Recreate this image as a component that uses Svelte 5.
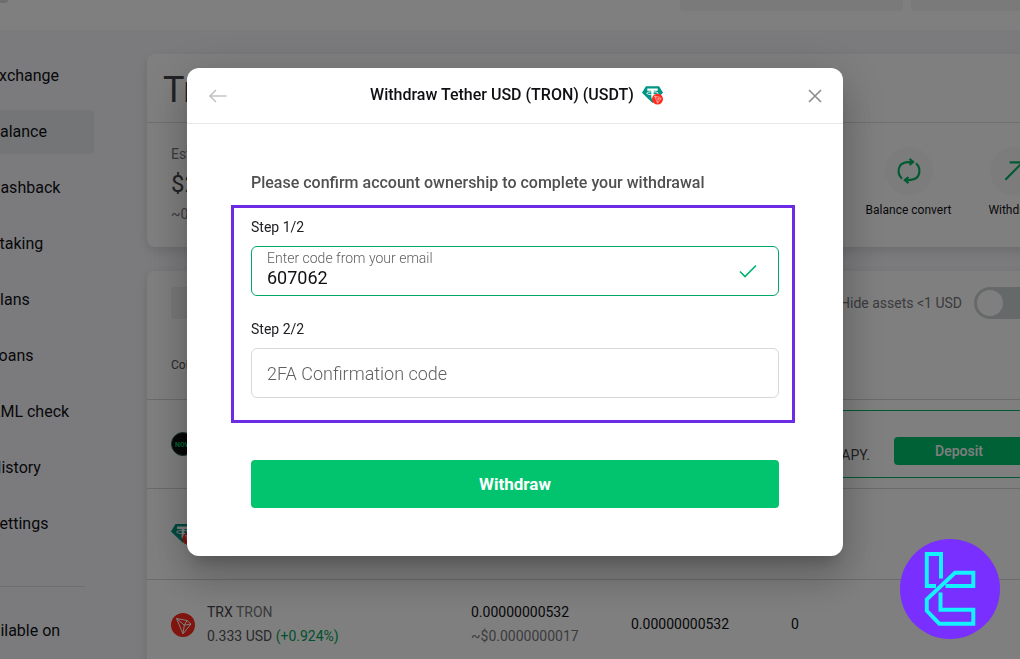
<script lang="ts">
  const navItems = ['Exchange', 'Balance', 'Cashback', 'Staking', 'Plans', 'Loans', 'AML check', 'History', 'Settings'];
  const active = 'Balance';

  let emailCode = $state('607062');
  let twoFaCode = $state('');
  let hideSmall = $state(false);
</script>

{#snippet tronMark()}
  <circle cx="12" cy="12" r="12" fill="#ff2a1c" />
  <path
    d="M5.500 5.500l10.500 2L20 11l-8 9.800zM5.500 5.500l7.800 6.700L20 11M13.300 12.200L16 7.500M13.300 12.200l-1.300 8.600"
    fill="none"
    stroke="#fff"
    stroke-width="1"
    stroke-linejoin="round"
  />
{/snippet}

{#snippet tetherIcon()}
  <svg class="tether" viewBox="0 0 24 22" aria-hidden="true">
    <path d="M4.500 1h15L24 8.500 12 20 0 8.500z" fill="#009482" />
    <path d="M6 3.500h12v2.500h-4.700V15h-2.600V6H6z" fill="#fff" />
    <ellipse cx="12" cy="9" rx="6.500" ry="1.700" fill="none" stroke="#fff" stroke-width="1" />
    <g transform="translate(11.500 9.500) scale(.52)">{@render tronMark()}</g>
  </svg>
{/snippet}

<div class="page">
  <header class="topbar">
    <span class="avatar"></span>
    <span class="pill"></span>
    <span class="pill last"></span>
  </header>

  <div class="layout">
    <aside>
      <nav>
        {#each navItems as item}
          <a href="#{item}" class:active={item === active}>{item}</a>
        {/each}
      </nav>
      <p class="available">Available on</p>
    </aside>

    <main>
      <section class="card summary">
        <h1>Trading</h1>
        <div class="summary-body">
          <div class="totals">
            <span class="muted">Estimated</span>
            <span class="amount">$2.35</span>
            <span class="muted">~0.00003</span>
          </div>
          <div class="actions">
            <button type="button" class="action">
              <span class="round">
                <svg viewBox="0 0 24 24" width="26" height="26" aria-hidden="true">
                  <path d="M5.500 19.200A9.600 9.600 0 0 1 4 6.700C6 4.200 9 3.300 15.500 3.600M12.500.800l3.300 2.900-3.300 2.700" />
                  <path d="M18.500 4.800A9.600 9.600 0 0 1 20 17.300c-2 2.500-5 3.400-11.500 3.100M11.500 23.200l-3.300-2.900 3.300-2.700" />
                </svg>
              </span>
              Balance convert
            </button>
            <button type="button" class="action">
              <span class="round">
                <svg viewBox="0 0 24 24" width="26" height="26" aria-hidden="true">
                  <path d="M4 20L20 4M8 4h12v12" />
                </svg>
              </span>
              Withdraw
            </button>
          </div>
        </div>
      </section>

      <section class="card assets">
        <div class="toolbar">
          <span class="search"></span>
          <label class="toggle">
            Hide assets &lt;1 USD
            <input type="checkbox" bind:checked={hideSmall} />
          </label>
        </div>
        <div class="columns">Coin</div>

        <div class="row promo">
          <svg class="coin" viewBox="0 0 24 24" aria-hidden="true">
            <circle cx="12" cy="12" r="11.500" fill="#101010" stroke="#3b6a50" />
            <text x="4" y="15" font-size="7" font-weight="700" fill="#00c46c">NOW</text>
          </svg>
          <div class="banner">
            <span>Earn up to 25% APY.</span>
            <button type="button" class="deposit">Deposit</button>
          </div>
        </div>

        <div class="row">
          <span class="coin">{@render tetherIcon()}</span>
        </div>

        <div class="row">
          <svg class="coin" viewBox="0 0 24 24" aria-hidden="true">{@render tronMark()}</svg>
          <div class="name">
            <span><b>TRX</b> TRON</span>
            <span class="rate">0.333 USD <i>(+0.924%)</i></span>
          </div>
          <div class="balance">
            <span>0.00000000532</span>
            <span class="muted">~$0.0000000017</span>
          </div>
          <span class="cell">0.00000000532</span>
          <span class="cell">0</span>
        </div>
      </section>
    </main>
  </div>
</div>

<div class="overlay">
  <div class="modal" role="dialog" aria-modal="true" aria-labelledby="modal-title">
    <header class="modal-header">
      <button type="button" class="icon-btn back" aria-label="Back">
        <svg viewBox="0 0 18 14" width="18" height="14"><path d="M17.500 7H1M7 1L1 7l6 6" /></svg>
      </button>
      <h2 id="modal-title">Withdraw Tether USD (TRON) (USDT) {@render tetherIcon()}</h2>
      <button type="button" class="icon-btn" aria-label="Close">
        <svg viewBox="0 0 14 14" width="14" height="14"><path d="M1 1l12 12M13 1L1 13" /></svg>
      </button>
    </header>

    <form class="modal-body" onsubmit={(e) => e.preventDefault()}>
      <p class="lead">Please confirm account ownership to complete your withdrawal</p>

      <div class="steps">
        <p class="step">Step 1/2</p>
        <div class="field valid">
          <div class="stack">
            <label for="email-code">Enter code from your email</label>
            <input id="email-code" type="text" inputmode="numeric" bind:value={emailCode} />
          </div>
          <svg viewBox="0 0 18 14" width="18" height="14" aria-hidden="true"><path d="M1 7.500L6 12.500 17 1.500" /></svg>
        </div>
        <p class="step">Step 2/2</p>
        <div class="field">
          <input type="text" aria-label="2FA Confirmation code" placeholder="2FA Confirmation code" bind:value={twoFaCode} />
        </div>
      </div>

      <button type="submit" class="submit">Withdraw</button>
    </form>
  </div>
</div>

<div class="brand">
  <svg viewBox="0 0 100 100" aria-hidden="true">
    <circle cx="50" cy="50" r="50" fill="#782fff" />
    <g fill="none" stroke="#14f1ff" stroke-width="4">
      <path d="M36 47h-9.200V15H41v24.500" />
      <path d="M45.500 47h27.800V33.800H55L26.800 60.300V71.800l12.500 12.900h34V70.700H40.500V53.500" />
    </g>
  </svg>
</div>

<style>
  :global(body) {
    margin: 0;
    font-family: Roboto, 'Liberation Sans', sans-serif;
    font-size: 14px;
    color: #101014;
  }
  p, h1, h2 { margin: 0; font-weight: 400; }
  button, input { font-family: inherit; }
  button { border: 0; padding: 0; cursor: pointer; }

  .page {
    height: 100vh;
    overflow: hidden;
    background: #f7f7fc;
  }
  .topbar {
    display: flex;
    justify-content: flex-end;
    gap: 8px;
    height: 30px;
    background: #fff;
  }
  .avatar { width: 8px; height: 3px; margin-right: auto; background: #ddd; border-radius: 0 0 8px 0; }
  .pill { width: 223px; height: 11px; background: #f5f5f7; border-radius: 0 0 4px 4px; }
  .pill.last { width: 109px; border-radius: 0 0 0 4px; }

  .layout {
    display: flex;
    gap: 53px;
    padding-top: 24px;
    margin: 0 -60px 0 -26px;
  }
  aside { width: 120px; flex: none; font-size: 16px; }
  nav {
    display: flex;
    flex-direction: column;
    gap: 12px;
    padding-bottom: 40px;
    margin-right: 9px;
    border-bottom: 1px solid #dcdcde;
  }
  nav a {
    padding-left: 16px;
    margin-right: -9px;
    border-radius: 0 4px 4px 0;
    line-height: 44px;
    color: inherit;
    text-decoration: none;
  }
  nav a.active { background: #e6ebee; }
  .available { padding-top: 32px; line-height: 24px; }

  main {
    flex: 1;
    display: flex;
    flex-direction: column;
    gap: 24px;
  }
  .card {
    background: #fff;
    border-radius: 8px;
    box-shadow: 0 4px 12px rgba(0, 0, 0, 0.12);
  }
  h1 {
    padding: 4px 16px 0;
    font-size: 36px;
    line-height: 64px;
    color: #45454a;
    border-bottom: 1px solid #dedede;
  }
  .summary-body {
    display: flex;
    justify-content: space-between;
    height: 124px;
    padding-left: 24px;
  }
  .totals { display: flex; flex-direction: column; padding-top: 19px; line-height: 24px; }
  .muted { color: #77777c; }
  .amount { font-size: 24px; line-height: 36px; color: #45454a; }
  .actions { display: flex; padding: 24px 14px 0 0; }
  .action {
    display: flex;
    flex-direction: column;
    align-items: center;
    gap: 6px;
    width: 105px;
    font-size: 12px;
    line-height: 18px;
    color: inherit;
    background: none;
  }
  .round {
    display: grid;
    place-items: center;
    width: 48px;
    height: 48px;
    border-radius: 50%;
    background: #f9f9fb;
  }
  .round path { fill: none; stroke: #00b464; stroke-width: 2; }

  .toolbar {
    display: flex;
    justify-content: space-between;
    align-items: center;
    height: 64px;
    padding: 0 42px 0 24px;
  }
  .search { width: 200px; height: 32px; background: #f1f1f3; border-radius: 4px; }
  .toggle { display: flex; align-items: center; gap: 12px; color: #77777c; }
  .toggle input {
    appearance: none;
    width: 64px;
    height: 32px;
    margin: 0;
    padding: 3px;
    border-radius: 16px;
    background: #cdd2d4;
  }
  .toggle input::before {
    content: '';
    display: block;
    width: 26px;
    height: 26px;
    border-radius: 50%;
    background: #fff;
  }
  .columns { padding: 18px 24px 22px; font-size: 12px; line-height: 24px; color: #55555a; }

  .row {
    display: flex;
    align-items: center;
    height: 90px;
    padding-left: 24px;
    border-top: 1px solid #d6d6d8;
  }
  .promo { height: 88px; }
  .coin { display: flex; width: 24px; height: 24px; margin-right: 12px; flex: none; }
  .tether { width: 100%; }
  .banner {
    flex: 1;
    display: flex;
    align-items: flex-end;
    justify-content: flex-end;
    gap: 24px;
    box-sizing: border-box;
    height: 68px;
    padding: 0 56px 12px 0;
    border: 1px solid #00b464;
    border-right: 0;
    line-height: 20px;
    color: #45454a;
  }
  .deposit {
    width: 130px;
    height: 28px;
    border-radius: 4px;
    background: #00c26c;
    color: #fff;
    font-size: 14px;
    font-weight: 500;
  }
  .name, .balance { display: flex; flex-direction: column; line-height: 24px; }
  .name, .balance, .cell { padding-bottom: 2px; }
  .name { width: 264px; color: #77777c; }
  .name b { font-weight: 400; color: #45454a; }
  .rate { color: #55555a; }
  .rate i { font-style: normal; color: #00a35a; }
  .balance, .cell { width: 160px; }

  .overlay {
    position: fixed;
    inset: 0;
    display: flex;
    justify-content: center;
    align-items: flex-start;
    padding: 68px 0 0 10px;
    background: rgba(0, 0, 0, 0.5);
  }
  .modal {
    width: 656px;
    max-width: 100%;
    border-radius: 12px;
    background: #fff;
    box-shadow: 0 11px 15px -7px rgba(0, 0, 0, 0.2), 0 24px 38px 3px rgba(0, 0, 0, 0.14), 0 9px 46px 8px rgba(0, 0, 0, 0.12);
  }
  .modal-header {
    display: flex;
    align-items: center;
    justify-content: space-between;
    height: 55px;
    padding: 0 17px 0 20px;
    border-bottom: 1px solid #e8e8e8;
  }
  h2 {
    display: flex;
    align-items: center;
    gap: 8px;
    padding-bottom: 2px;
    font-size: 16px;
    font-weight: 500;
    line-height: 24px;
  }
  h2 .tether { width: 21px; height: 20px; }
  .icon-btn { display: grid; place-items: center; width: 22px; height: 24px; background: none; }
  .icon-btn path { fill: none; stroke: #8b8b8b; stroke-width: 1.6; }
  .back path { stroke: #c4c4c4; }

  .modal-body { display: flex; flex-direction: column; padding: 47px 64px 48px; }
  .lead { margin-bottom: 10px; font-size: 16px; font-weight: 500; line-height: 24px; color: #505050; }
  .steps {
    margin: 0 -16px 37px -20px;
    padding: 9px 13px 22px 17px;
    border: 3px solid #6d2be6;
  }
  .step { margin-bottom: 9px; line-height: 20px; color: #202024; }
  .field {
    display: flex;
    align-items: center;
    height: 48px;
    padding: 0 21px 0 15px;
    border: 1px solid #d8d8d8;
    border-radius: 6px;
  }
  .field.valid { margin-bottom: 23px; border-color: #00a868; }
  .stack { flex: 1; display: flex; flex-direction: column; padding-bottom: 6px; }
  .field label { line-height: 18px; font-weight: 300; color: #606060; }
  .field input {
    width: 100%;
    height: 20px;
    padding: 0;
    border: 0;
    outline: 0;
    background: none;
    font-size: 18px;
    color: #101014;
  }
  .field input::placeholder { color: #606060; font-weight: 300; opacity: 1; }
  .field path { fill: none; stroke: #00b070; stroke-width: 1.6; }
  .submit {
    height: 48px;
    border-radius: 4px;
    background: #02c46e;
    color: #fff;
    font-size: 17px;
    font-weight: 700;
  }

  .brand { position: fixed; right: 20px; bottom: 20px; width: 100px; height: 100px; }
</style>
